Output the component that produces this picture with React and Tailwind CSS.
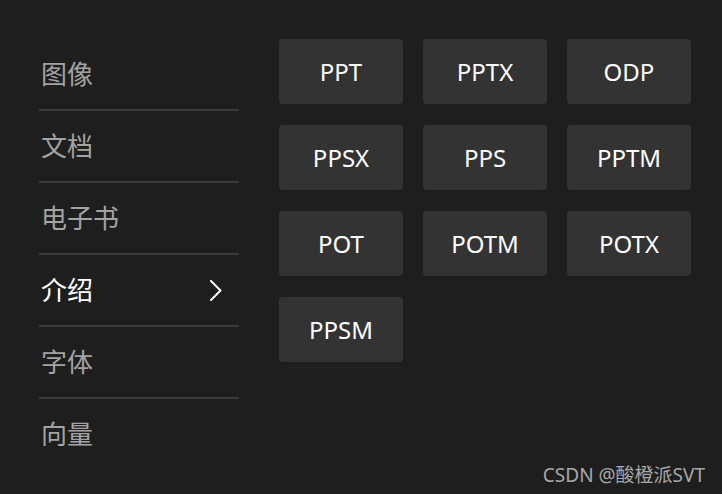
const navItems = ["图像", "文档", "电子书", "介绍", "字体", "向量"];
const formats = ["PPT", "PPTX", "ODP", "PPSX", "PPS", "PPTM", "POT", "POTM", "POTX", "PPSM"];

function Chevron() {
  return (
    <svg width="14" height="21" viewBox="0 0 14 21" fill="none" className="text-white">
      <polyline points="2,1 11.5,10.5 2,20" stroke="currentColor" strokeWidth="2" strokeLinecap="round" strokeLinejoin="round" />
    </svg>
  );
}

function App() {
  const active = "介绍";

  return (
    <div
      className="relative w-[722px] h-[494px] bg-[#1e1e1e] overflow-hidden"
      style={{ fontFamily: '"Noto Sans", "Noto Sans CJK SC", sans-serif' }}
    >
      <div className="flex gap-10 pl-[39px] pt-[39px]">
        <nav className="w-[200px] flex flex-col">
          {navItems.map((item, i) => (
            <div
              key={item}
              className={`flex items-center justify-between pl-[2px] pr-[16px] ${
                i < navItems.length - 1 ? "h-[72px] border-b-2 border-[#3a3a3a]" : "h-[70px]"
              }`}
            >
              <span
                className={`text-[26px] leading-none ${
                  item === active ? "text-white" : "text-[#a3a3a3]"
                }`}
              >
                {item}
              </span>
              {item === active && <Chevron />}
            </div>
          ))}
        </nav>

        <div className="grid grid-cols-[124px_124px_124px] gap-x-5 gap-y-[21px] content-start">
          {formats.map((f) => (
            <button
              key={f}
              className="h-[65px] rounded bg-[#333333] text-white text-[24px] flex items-center justify-center"
            >
              {f}
            </button>
          ))}
        </div>
      </div>

      <div className="absolute right-[17px] bottom-[5px] text-[19px] text-[#a8a8a8]">
        CSDN @酸橙派SVT
      </div>
    </div>
  );
}

export default App;
